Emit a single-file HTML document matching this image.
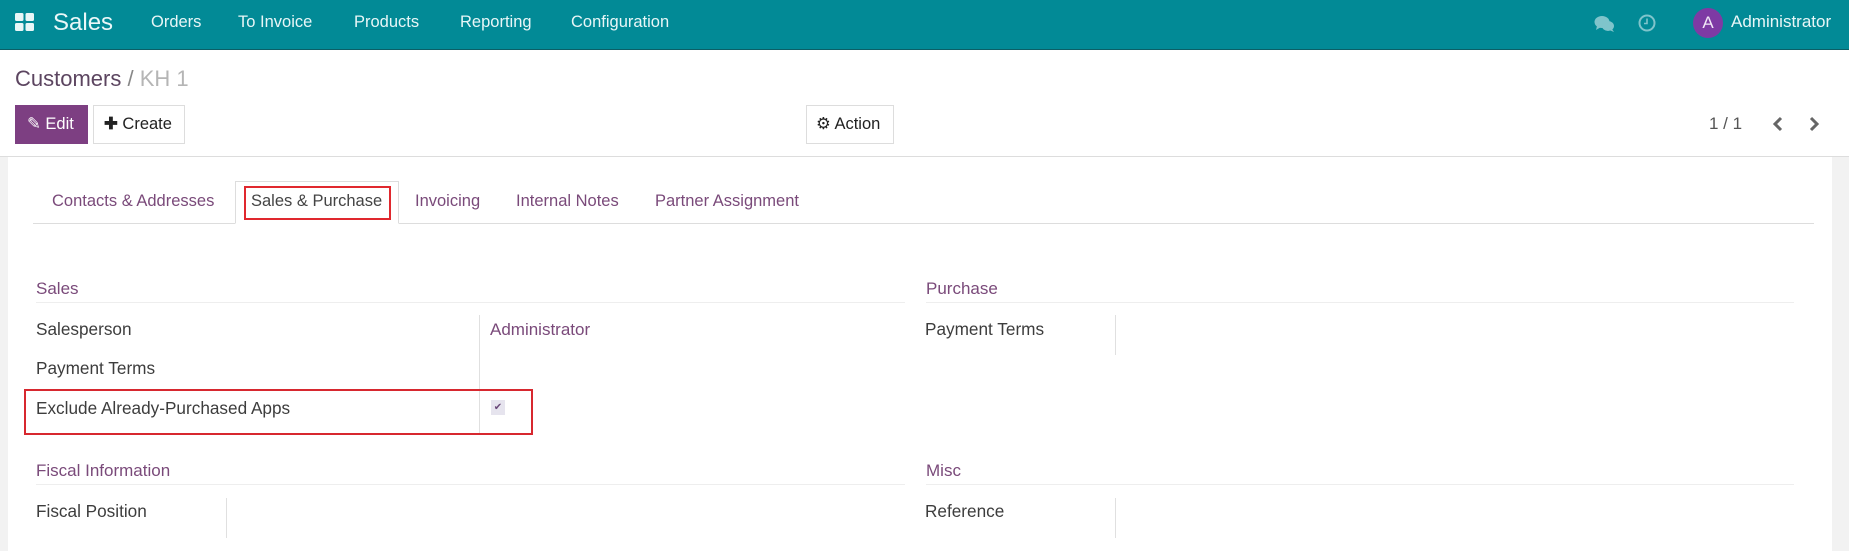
<!DOCTYPE html>
<html><head><meta charset="utf-8"><style>
*{margin:0;padding:0;box-sizing:border-box}
body{width:1849px;height:551px;overflow:hidden;background:#fff;font-family:"Liberation Sans",sans-serif;position:relative;color:#4c4c4c}
.a{position:absolute;white-space:nowrap}
.nav{position:absolute;left:0;top:0;width:1849px;height:50px;background:#028a96;border-bottom:1px solid #0b5f66}
.nv{color:#e8f6f7;font-size:16.5px;top:13px}
.p{color:#7a4a7a}
.lbl{font-size:17.2px;color:#3d3d3d}
.tb{font-size:16.5px;top:192px}
.hl{position:absolute;height:1px;background:#e4e4e4}
.vl{position:absolute;width:1px;background:#e0e0e0}
</style></head><body>
<div class="nav"></div>
<svg class="a" style="left:15px;top:13px" width="20" height="19"><rect x="0" y="0" width="8.5" height="8" rx="1.5" fill="#e8f6f7"/><rect x="10.5" y="0" width="8.5" height="8" rx="1.5" fill="#e8f6f7"/><rect x="0" y="10" width="8.5" height="8" rx="1.5" fill="#e8f6f7"/><rect x="10.5" y="10" width="8.5" height="8" rx="1.5" fill="#e8f6f7"/></svg>
<div class="a" style="left:53px;top:9px;font-size:24px;color:#eaf7f8">Sales</div>
<div class="a nv" style="left:151px">Orders</div>
<div class="a nv" style="left:238px">To Invoice</div>
<div class="a nv" style="left:354px">Products</div>
<div class="a nv" style="left:460px">Reporting</div>
<div class="a nv" style="left:571px">Configuration</div>
<svg class="a" style="left:1594px;top:15px" width="22" height="18"><ellipse cx="8" cy="7" rx="7.5" ry="6" fill="#7fc4cb"/><ellipse cx="14" cy="11" rx="6" ry="5" fill="#7fc4cb"/><path d="M3 11 L2 15 L7 12Z M18 14 L20 17 L15 15Z" fill="#7fc4cb"/></svg>
<svg class="a" style="left:1638px;top:14px" width="18" height="18"><circle cx="9" cy="9" r="7.5" fill="none" stroke="#7fc4cb" stroke-width="2"/><path d="M9 4.5V9.5H6" fill="none" stroke="#7fc4cb" stroke-width="1.6"/></svg>
<div class="a" style="left:1693px;top:8px;width:30px;height:30px;border-radius:50%;background:#7e3aa4;color:#f0e6f6;font-size:17px;text-align:center;line-height:30px">A</div>
<div class="a" style="left:1731px;top:12px;font-size:17px;color:#e8f6f7">Administrator</div>

<div class="a" style="left:15px;top:66px;font-size:22px;color:#5c4560">Customers <span style="color:#888">/</span> <span style="color:#b5b5b5">KH 1</span></div>
<div class="a" style="left:15px;top:105px;width:73px;height:39px;background:#7d3f82;color:#fff;font-size:16.5px;line-height:39px;padding-left:12px">✎ Edit</div>
<div class="a" style="left:93px;top:105px;width:92px;height:39px;border:1px solid #ddd;color:#222;font-size:16.5px;line-height:37px;padding-left:10px"><b>✚</b> Create</div>
<div class="a" style="left:806px;top:105px;width:88px;height:39px;border:1px solid #ddd;color:#222;font-size:16.5px;line-height:37px;padding-left:9px">⚙ Action</div>
<div class="a" style="left:1709px;top:114px;font-size:17px;color:#555">1 / 1</div>
<svg class="a" style="left:1772px;top:116px" width="12" height="16"><path d="M9 2L3 8L9 14" fill="none" stroke="#666" stroke-width="3"/></svg>
<svg class="a" style="left:1808px;top:116px" width="12" height="16"><path d="M3 2L9 8L3 14" fill="none" stroke="#666" stroke-width="3"/></svg>

<div class="hl" style="left:0;top:156px;width:1849px;background:#ddd"></div>
<div class="a" style="left:0;top:157px;width:8px;height:394px;background:#f2f2f2"></div>
<div class="a" style="left:1832px;top:157px;width:17px;height:394px;background:#f2f2f2"></div>

<div class="hl" style="left:33px;top:223px;width:1781px;background:#ddd"></div>
<div class="a" style="left:235px;top:181px;width:164px;height:43px;border:1px solid #ddd;border-bottom:1px solid #fff;background:#fff"></div>
<div class="a p tb" style="left:52px">Contacts &amp; Addresses</div>
<div class="a tb" style="left:251px;color:#444">Sales &amp; Purchase</div>
<div class="a p tb" style="left:415px">Invoicing</div>
<div class="a p tb" style="left:516px">Internal Notes</div>
<div class="a p tb" style="left:655px">Partner Assignment</div>
<div class="a" style="left:244px;top:186px;width:147px;height:34px;border:2px solid #e0282e"></div>

<div class="a p" style="left:36px;top:279px;font-size:17px">Sales</div>
<div class="hl" style="left:36px;top:302px;width:869px;background:#eee"></div>
<div class="a p" style="left:926px;top:279px;font-size:17px">Purchase</div>
<div class="hl" style="left:926px;top:302px;width:868px;background:#eee"></div>

<div class="a lbl" style="left:36px;top:319px">Salesperson</div>
<div class="a lbl" style="left:36px;top:358px">Payment Terms</div>
<div class="a lbl" style="left:36px;top:398px">Exclude Already-Purchased Apps</div>
<div class="vl" style="left:479px;top:315px;height:118px"></div>
<div class="a p" style="left:490px;top:320px;font-size:17px">Administrator</div>
<div class="a" style="left:491px;top:400px;width:14px;height:15px;background:#e6e4ee;color:#6b4a7a;font-size:10px;text-align:center;line-height:15px">✔</div>
<div class="a" style="left:24px;top:389px;width:509px;height:46px;border:2px solid #d7282f"></div>
<div class="a lbl" style="left:925px;top:319px">Payment Terms</div>
<div class="vl" style="left:1115px;top:315px;height:40px"></div>

<div class="a p" style="left:36px;top:461px;font-size:17px">Fiscal Information</div>
<div class="hl" style="left:36px;top:484px;width:869px;background:#eee"></div>
<div class="a p" style="left:926px;top:461px;font-size:17px">Misc</div>
<div class="hl" style="left:926px;top:484px;width:868px;background:#eee"></div>
<div class="a lbl" style="left:36px;top:501px">Fiscal Position</div>
<div class="vl" style="left:226px;top:498px;height:40px"></div>
<div class="a lbl" style="left:925px;top:501px">Reference</div>
<div class="vl" style="left:1115px;top:498px;height:40px"></div>
</body></html>
